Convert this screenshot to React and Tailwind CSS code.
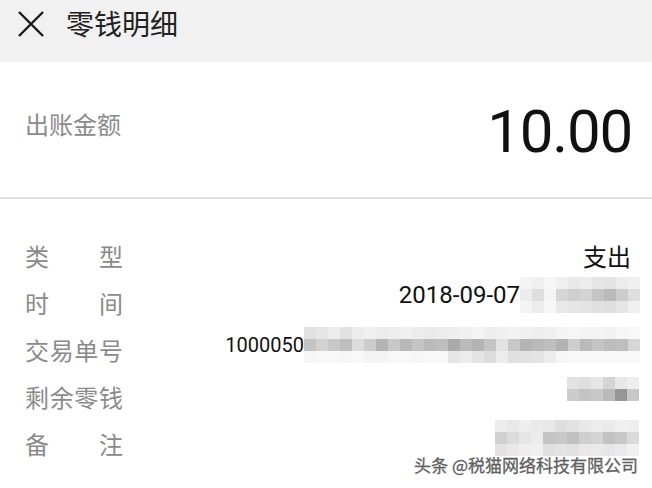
const cjk = '"Noto Sans CJK SC", "Noto Sans", sans-serif';
const num = 'Roboto, "Noto Sans", sans-serif';

function CloseIcon() {
    return (
        <svg width="28" height="28" viewBox="0 0 28 28" className="mt-[4px] shrink-0">
            <path d="M2 2 L26 26 M26 2 L2 26" stroke="#1a1a1a" strokeWidth="2.4" fill="none" />
        </svg>
    );
}

function Mosaic({ rows, size = 12 }) {
    return (
        <div className="flex flex-col blur-[0.6px]">
            {rows.map((row, i) => (
                <div key={i} className="flex">
                    {row.map((g, j) => (
                        <div
                            key={j}
                            style={{ width: size, height: size, background: `rgb(${g},${g},${g})` }}
                        />
                    ))}
                </div>
            ))}
        </div>
    );
}

const labels = [
    ['类', '型'],
    ['时', '间'],
    ['交', '易', '单', '号'],
    ['剩', '余', '零', '钱'],
    ['备', '注'],
];

function Label({ chars }) {
    return (
        <div className="flex w-[98px] justify-between text-[24px] leading-none text-[#8a8a8a]">
            {chars.map((c) => (
                <span key={c}>{c}</span>
            ))}
        </div>
    );
}

export default function App() {
    return (
        <div className="h-[488px] w-[652px] overflow-hidden bg-white" style={{ fontFamily: cjk }}>
            <header className="flex h-[62px] items-start gap-[21px] bg-[#f1f1f1] pl-[17px] pt-[6px]">
                <CloseIcon />
                <h1 className="text-[28px] leading-[34px] text-[#222]">零钱明细</h1>
            </header>

            <section className="flex h-[137px] items-start justify-between border-b-2 border-[#e2e2e2] pl-[25px] pr-[20px]">
                <p className="mt-[50px] text-[24px] leading-none text-[#8a8a8a]">出账金额</p>
                <p
                    className="mt-[30px] text-[60px] leading-[80px] tracking-[-1.2px] text-[#111]"
                    style={{ fontFamily: num }}
                >
                    10.00
                </p>
            </section>

            <section className="relative pl-[25px] pr-[21px] pt-[45px]">
                <div className="flex h-[47px] items-start justify-between">
                    <Label chars={labels[0]} />
                    <span className="text-[24px] leading-none text-[#111]">支出</span>
                </div>
                <div className="flex h-[47px] items-start justify-between">
                    <Label chars={labels[1]} />
                    <div className="-mr-[9px] -mt-[14px] flex items-center">
                        <span className="text-[24px] leading-none text-[#111]" style={{ fontFamily: num }}>
                            2018-09-07
                        </span>
                        <Mosaic
                            size={12}
                            rows={[
                                [244, 240, 246, 240, 232, 236, 230, 228, 236, 240],
                                [236, 222, 244, 214, 206, 212, 196, 186, 204, 222],
                                [244, 236, 246, 232, 230, 228, 224, 222, 230, 240],
                            ]}
                        />
                    </div>
                </div>
                <div className="flex h-[47px] items-start justify-between">
                    <Label chars={labels[2]} />
                    <div className="-mr-[9px] -mt-[11px] flex items-center">
                        <span className="text-[20px] leading-none text-[#111]" style={{ fontFamily: num }}>
                            1000050
                        </span>
                        <Mosaic
                            size={12}
                            rows={[
                                [226, 230, 236, 226, 236, 240, 236, 238, 240, 236, 234, 236, 238, 240, 244, 238, 240, 242, 240, 238, 240, 244, 246, 244, 244, 242, 246, 248],
                                [196, 210, 200, 190, 220, 204, 180, 200, 184, 196, 186, 190, 170, 186, 180, 196, 226, 200, 180, 186, 190, 178, 206, 186, 196, 188, 190, 214],
                                [246, 248, 248, 246, 248, 244, 244, 248, 248, 246, 248, 248, 230, 236, 228, 220, 236, 224, 226, 228, 236, 246, 248, 248, 248, 248, 248, 248],
                            ]}
                        />
                    </div>
                </div>
                <div className="flex h-[47px] items-start justify-between">
                    <Label chars={labels[3]} />
                    <div className="-mr-[8px] -mt-[8px]">
                        <Mosaic
                            size={12}
                            rows={[
                                [226, 222, 230, 212, 232, 238],
                                [204, 196, 200, 186, 150, 200],
                            ]}
                        />
                    </div>
                </div>
                <div className="flex h-[47px] items-start justify-between">
                    <Label chars={labels[4]} />
                    <div className="-mr-[8px] -mt-[12px]">
                        <Mosaic
                            size={12}
                            rows={[
                                [236, 232, 238, 234, 232, 222, 226, 232, 236, 234, 240, 238],
                                [208, 220, 230, 236, 196, 200, 192, 206, 212, 194, 200, 218],
                                [226, 232, 238, 240, 224, 228, 226, 232, 234, 230, 234, 240],
                            ]}
                        />
                    </div>
                </div>

                <p
                    className="absolute bottom-[6px] right-[14px] text-[17px] leading-none text-[#5e5e5e]"
                    style={{ textShadow: '0 0 2px #fff, 0 0 2px #fff, 1px 1px 1px #fff', WebkitTextStroke: '0.3px #5e5e5e' }}
                >
                    头条 @税猫网络科技有限公司
                </p>
            </section>
        </div>
    );
}
